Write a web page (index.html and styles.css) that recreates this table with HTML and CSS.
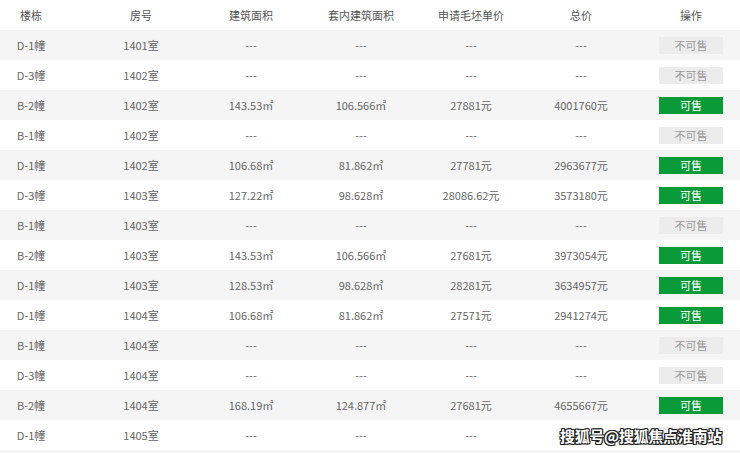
FILE: index.html
```html
<!DOCTYPE html>
<html lang="zh">
<head>
<meta charset="utf-8">
<link rel="stylesheet" href="styles.css">
</head>
<body>
<div class="page">
<table class="units">
<thead>
<tr><th>楼栋</th><th>房号</th><th>建筑面积</th><th>套内建筑面积</th><th>申请毛坯单价</th><th>总价</th><th>操作</th></tr>
</thead>
<tbody>
<tr><td>D-1幢</td><td>1401室</td><td>---</td><td>---</td><td>---</td><td>---</td><td><span class="btn off">不可售</span></td></tr>
<tr><td>D-3幢</td><td>1402室</td><td>---</td><td>---</td><td>---</td><td>---</td><td><span class="btn off">不可售</span></td></tr>
<tr><td>B-2幢</td><td>1402室</td><td>143.53㎡</td><td>106.566㎡</td><td>27881元</td><td>4001760元</td><td><span class="btn on">可售</span></td></tr>
<tr><td>B-1幢</td><td>1402室</td><td>---</td><td>---</td><td>---</td><td>---</td><td><span class="btn off">不可售</span></td></tr>
<tr><td>D-1幢</td><td>1402室</td><td>106.68㎡</td><td>81.862㎡</td><td>27781元</td><td>2963677元</td><td><span class="btn on">可售</span></td></tr>
<tr><td>D-3幢</td><td>1403室</td><td>127.22㎡</td><td>98.628㎡</td><td>28086.62元</td><td>3573180元</td><td><span class="btn on">可售</span></td></tr>
<tr><td>B-1幢</td><td>1403室</td><td>---</td><td>---</td><td>---</td><td>---</td><td><span class="btn off">不可售</span></td></tr>
<tr><td>B-2幢</td><td>1403室</td><td>143.53㎡</td><td>106.566㎡</td><td>27681元</td><td>3973054元</td><td><span class="btn on">可售</span></td></tr>
<tr><td>D-1幢</td><td>1403室</td><td>128.53㎡</td><td>98.628㎡</td><td>28281元</td><td>3634957元</td><td><span class="btn on">可售</span></td></tr>
<tr><td>D-1幢</td><td>1404室</td><td>106.68㎡</td><td>81.862㎡</td><td>27571元</td><td>2941274元</td><td><span class="btn on">可售</span></td></tr>
<tr><td>B-1幢</td><td>1404室</td><td>---</td><td>---</td><td>---</td><td>---</td><td><span class="btn off">不可售</span></td></tr>
<tr><td>D-3幢</td><td>1404室</td><td>---</td><td>---</td><td>---</td><td>---</td><td><span class="btn off">不可售</span></td></tr>
<tr><td>B-2幢</td><td>1404室</td><td>168.19㎡</td><td>124.877㎡</td><td>27681元</td><td>4655667元</td><td><span class="btn on">可售</span></td></tr>
<tr><td>D-1幢</td><td>1405室</td><td>---</td><td>---</td><td>---</td><td>---</td><td><span class="btn off">不可售</span></td></tr>
<tr><td></td><td></td><td></td><td></td><td></td><td></td><td></td></tr>
</tbody>
</table>
<div class="watermark">搜狐号@搜狐焦点淮南站</div>
</div>
</body>
</html>
```
FILE: styles.css
```css
html, body {
  margin: 0;
  padding: 0;
  background: #fff;
  overflow: hidden;
}
body {
  font-family: "Noto Sans CJK SC", "Noto Sans", sans-serif;
  font-size: 11px;
  color: #666;
}
.page {
  position: relative;
  width: 740px;
  height: 453px;
  overflow: hidden;
}
.units {
  border-collapse: collapse;
  table-layout: fixed;
  width: 770px;
  margin-left: -24px;
}
.units th, .units td {
  width: 110px;
  height: 30px;
  padding: 0;
  text-align: center;
  vertical-align: middle;
  font-weight: normal;
  line-height: 14px;
}
.units th {
  color: #555;
}
.units tbody tr:nth-child(odd) {
  background: #f5f5f5;
}
.btn {
  display: inline-block;
  width: 64px;
  height: 17px;
  line-height: 17px;
  font-size: 11px;
  vertical-align: middle;
}
.btn.off {
  background: #ececec;
  color: #999;
}
.btn.on {
  background: #0a9a38;
  color: #fff;
}
.watermark {
  position: absolute;
  left: 560px;
  top: 425px;
  font-size: 15px;
  font-weight: bold;
  color: #fff;
  letter-spacing: -0.3px;
  text-shadow: 1px 1px 0 #222, -1px -1px 0 #222, 1px -1px 0 #222, -1px 1px 0 #222, 0 1px 0 #222, 1px 0 0 #222, 0 -1px 0 #222, -1px 0 0 #222;
}
```
